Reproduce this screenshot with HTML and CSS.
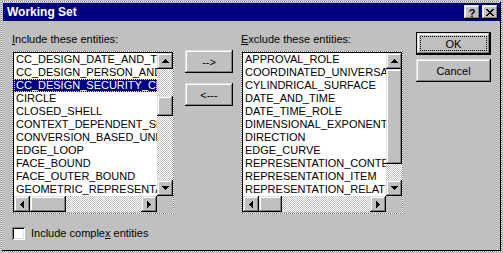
FILE: index.html
```html
<!DOCTYPE html>
<html>
<head>
<meta charset="utf-8">
<link rel="stylesheet" href="styles.css">
</head>
<body>
<div class="screen"><div class="ring"><div class="win">
  <div class="titlebar">
    <span class="title">Working Set</span>
    <div class="tbtns">
      <span class="tbtn help">?</span>
      <span class="tbtn"><svg width="8" height="7" viewBox="0 0 8 7"><path d="M0 0h2v1H0zM6 0h2v1H6zM1 1h2v1H1zM5 1h2v1H5zM2 2h4v1H2zM3 3h2v1H3zM2 4h4v1H2zM1 5h2v1H1zM5 5h2v1H5zM0 6h2v1H0zM6 6h2v1H6z"/></svg></span>
    </div>
  </div>
  <div class="content">
    <div class="row">
      <div class="col-list">
        <div class="label"><u>I</u>nclude these entities:</div>
        <div class="listbox"><div class="lb-inner">
          <ul class="items">
            <li>CC_DESIGN_DATE_AND_TIME_ASSIGNMENT</li>
            <li>CC_DESIGN_PERSON_AND_ORGANIZATION_ASSIGNMENT</li>
            <li class="sel">CC_DESIGN_SECURITY_CLASSIFICATION</li>
            <li>CIRCLE</li>
            <li>CLOSED_SHELL</li>
            <li>CONTEXT_DEPENDENT_SHAPE_REPRESENTATION</li>
            <li>CONVERSION_BASED_UNIT</li>
            <li>EDGE_LOOP</li>
            <li>FACE_BOUND</li>
            <li>FACE_OUTER_BOUND</li>
            <li>GEOMETRIC_REPRESENTATION_CONTEXT</li>
          </ul>
          <div class="vscroll">
            <span class="sbtn"><svg width="7" height="4" viewBox="0 0 7 4"><path d="M3 0h1v1h1v1h1v1h1v1H0V3h1V2h1V1h1z"/></svg></span>
            <div class="vtrack"><span class="thumb vthumb thumb-a"></span></div>
            <span class="sbtn"><svg width="7" height="4" viewBox="0 0 7 4"><path d="M0 0h7v1H6v1H5v1H4v1H3V3H2V2H1V1H0z"/></svg></span>
          </div>
          <div class="hscroll">
            <span class="sbtn"><svg width="4" height="7" viewBox="0 0 4 7"><path d="M0 3h1V2h1V1h1V0h1v7H3V6H2V5H1V4H0z"/></svg></span>
            <div class="htrack"><span class="thumb hthumb hthumb-a"></span></div>
            <span class="sbtn"><svg width="4" height="7" viewBox="0 0 4 7"><path d="M0 0h1v1h1v1h1v1h1v1H3v1H2v1H1v1H0z"/></svg></span>
          </div>
          <div class="corner"></div>
        </div></div>
      </div>
      <div class="col-arrows">
        <div class="btn">--&gt;</div>
        <div class="btn">&lt;---</div>
      </div>
      <div class="col-list col-right">
        <div class="label"><u>E</u>xclude these entities:</div>
        <div class="listbox"><div class="lb-inner">
          <ul class="items">
            <li>APPROVAL_ROLE</li>
            <li>COORDINATED_UNIVERSAL_TIME_OFFSET</li>
            <li>CYLINDRICAL_SURFACE</li>
            <li>DATE_AND_TIME</li>
            <li>DATE_TIME_ROLE</li>
            <li>DIMENSIONAL_EXPONENTS</li>
            <li>DIRECTION</li>
            <li>EDGE_CURVE</li>
            <li>REPRESENTATION_CONTEXT</li>
            <li>REPRESENTATION_ITEM</li>
            <li>REPRESENTATION_RELATIONSHIP</li>
          </ul>
          <div class="vscroll">
            <span class="sbtn"><svg width="7" height="4" viewBox="0 0 7 4"><path d="M3 0h1v1h1v1h1v1h1v1H0V3h1V2h1V1h1z"/></svg></span>
            <div class="vtrack"><span class="thumb vthumb thumb-b"></span></div>
            <span class="sbtn"><svg width="7" height="4" viewBox="0 0 7 4"><path d="M0 0h7v1H6v1H5v1H4v1H3V3H2V2H1V1H0z"/></svg></span>
          </div>
          <div class="hscroll">
            <span class="sbtn"><svg width="4" height="7" viewBox="0 0 4 7"><path d="M0 3h1V2h1V1h1V0h1v7H3V6H2V5H1V4H0z"/></svg></span>
            <div class="htrack"><span class="thumb hthumb hthumb-b"></span></div>
            <span class="sbtn"><svg width="4" height="7" viewBox="0 0 4 7"><path d="M0 0h1v1h1v1h1v1h1v1H3v1H2v1H1v1H0z"/></svg></span>
          </div>
          <div class="corner"></div>
        </div></div>
      </div>
      <div class="col-btns">
        <div class="btn default">OK</div>
        <div class="btn">Cancel</div>
      </div>
    </div>
    <div class="check"><span class="box"></span><span>Include comple<u>x</u> entities</span></div>
  </div>
</div></div></div>
</body>
</html>
```
FILE: styles.css
```css
* { box-sizing: border-box; }
html, body { margin: 0; }
body {
  font-family: "Liberation Sans", Arial, sans-serif;
  font-size: 11px;
  color: #000;
  background: #c0c0c0;
}
.screen {
  width: 503px;
  height: 253px;
  background: #c0c0c0;
  padding: 1px;
}
.ring {
  height: 100%;
  padding: 1px;
  background: repeating-conic-gradient(#808080 0 25%, #fff 0 50%) 0 0 / 2px 2px;
}
.win {
  height: 100%;
  background: #c0c0c0;
  padding: 1px 0 0 1px;
  border-right: 1px solid #000;
  border-bottom: 1px solid #000;
  display: flex;
  flex-direction: column;
}
.titlebar {
  flex: none;
  height: 18px;
  background: #000080;
  display: flex;
  align-items: center;
  justify-content: space-between;
  padding: 0 2px 0 4px;
}
.title {
  color: #fff;
  font-weight: bold;
  font-size: 12px;
  line-height: 18px;
}
.tbtns { display: flex; gap: 2px; }
.tbtn {
  width: 16px;
  height: 14px;
  background: #c0c0c0;
  box-shadow: inset -1px -1px #000, inset 1px 1px #dfdfdf, inset -2px -2px #808080, inset 2px 2px #fff;
  display: flex;
  align-items: center;
  justify-content: center;
}
.tbtn.help {
  font-weight: bold;
  font-size: 11px;
  line-height: 14px;
  padding-top: 1px;
}
.content {
  flex: 1;
  padding: 12px 9px 0 9px;
}
.row {
  display: flex;
  align-items: flex-start;
}
.col-list {
  width: 162px;
  flex: none;
}
.col-right { margin-left: 8px; }
.label {
  height: 13px;
  line-height: 13px;
  margin-bottom: 5px;
  white-space: nowrap;
}
.listbox {
  height: 163px;
  padding: 1px;
  background: repeating-conic-gradient(#808080 0 25%, #fff 0 50%) 0 0 / 2px 2px;
}
.lb-inner {
  height: 100%;
  background: #fff;
  border-top: 1px solid #000;
  border-left: 1px solid #000;
  border-bottom: 1px solid #c0c0c0;
  display: grid;
  grid-template-columns: 143px 16px;
  grid-template-rows: 143px 16px;
}
.items {
  margin: 0;
  padding: 0;
  list-style: none;
  overflow: hidden;
}
.items li {
  height: 13px;
  line-height: 13px;
  padding-left: 2px;
  white-space: nowrap;
  overflow: hidden;
}
.items li.sel {
  background: #000080;
  color: #fff;
  outline: 1px dotted #ffff00;
  outline-offset: -1px;
}
.vscroll, .hscroll {
  display: flex;
  background: repeating-conic-gradient(#fff 0 25%, #c0c0c0 0 50%) 0 0 / 2px 2px;
}
.vscroll { flex-direction: column; }
.sbtn, .thumb, .btn {
  background: #c0c0c0;
  box-shadow: inset -1px -1px #000, inset 1px 1px #dfdfdf, inset -2px -2px #808080, inset 2px 2px #fff;
}
.sbtn {
  flex: none;
  width: 16px;
  height: 16px;
  display: flex;
  align-items: center;
  justify-content: center;
}
.vtrack { flex: 1; display: flex; flex-direction: column; }
.htrack { flex: 1; display: flex; }
.thumb { display: block; flex: none; }
.vthumb { width: 16px; }
.thumb-a { margin-top: 27px; height: 20px; }
.thumb-b { margin-top: 0; height: 95px; }
.hthumb { height: 16px; }
.hthumb-a { width: 36px; }
.hthumb-b { width: 23px; }
.corner { background: #c0c0c0; }
.col-arrows {
  flex: none;
  width: 48px;
  margin-left: 11px;
  margin-top: 17px;
  display: flex;
  flex-direction: column;
  gap: 10px;
}
.btn {
  height: 23px;
  display: flex;
  align-items: center;
  justify-content: center;
  white-space: nowrap;
}
.col-btns {
  flex: none;
  width: 75px;
  margin-left: 13px;
  margin-top: -1px;
  display: flex;
  flex-direction: column;
  gap: 4px;
}
.btn.default {
  border: 1px solid #000;
  outline: 1px dotted #000;
  outline-offset: -5px;
}
.check {
  display: flex;
  align-items: center;
  gap: 6px;
  margin-top: 13px;
  height: 13px;
  line-height: 13px;
}
.box {
  width: 13px;
  height: 13px;
  background: #fff;
  box-shadow: inset 1px 1px #808080, inset -1px -1px #fff, inset 2px 2px #000, inset -2px -2px #dfdfdf;
}
```
